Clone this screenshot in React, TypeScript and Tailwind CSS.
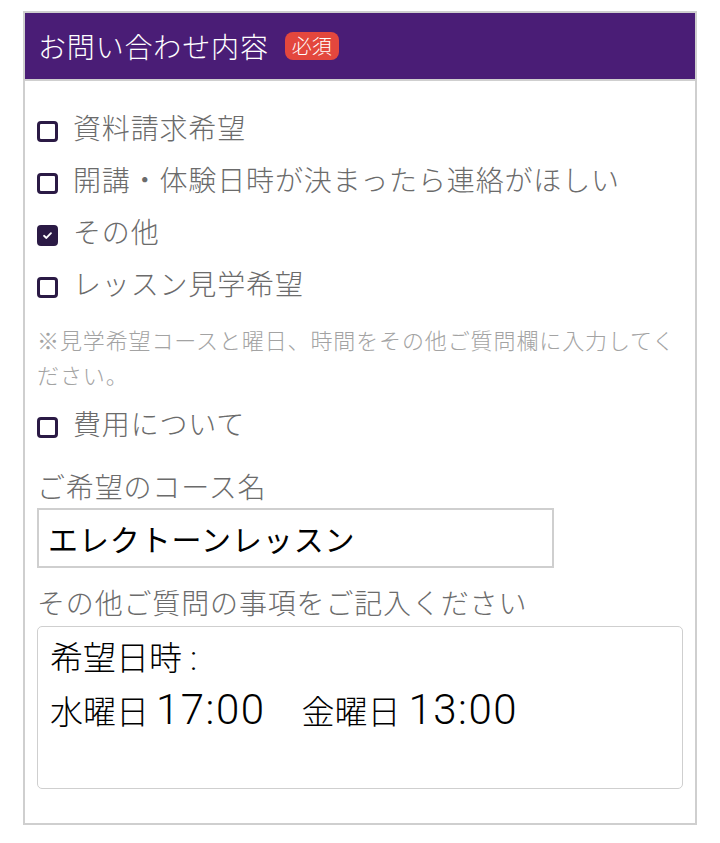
import { useState } from "react";

const options = [
  { label: "資料請求希望", checked: false },
  { label: "開講・体験日時が決まったら連絡がほしい", checked: false },
  { label: "その他", checked: true },
  { label: "レッスン見学希望", checked: false },
];

const Box = ({ checked }: { checked: boolean }) => (
  <span
    className={
      checked
        ? "mt-[9px] flex h-[21px] w-[21px] shrink-0 items-center justify-center rounded-[4px] border-[3px] border-[#2b1a45] bg-[#2b1a45]"
        : "mt-[9px] flex h-[21px] w-[21px] shrink-0 items-center justify-center rounded-[4px] border-[3px] border-[#2b1a45] bg-white"
    }
  >
    {checked && (
      <svg viewBox="0 0 12 12" className="h-[11px] w-[11px]">
        <path d="M2.2 6.3 L4.8 8.7 L9.8 3.4" fill="none" stroke="#fff" strokeWidth="2" strokeLinecap="round" strokeLinejoin="round" />
      </svg>
    )}
  </span>
);

const Option = ({ label, checked }: { label: string; checked: boolean }) => (
  <label className="flex h-[52px] items-center gap-[15px]">
    <Box checked={checked} />
    <span className="text-[28px] font-light leading-[52px] tracking-[0.03em] text-[#6b6b6b]">{label}</span>
  </label>
);

// digits in the memo field use a taller Latin face
const Num = ({ children, className }: { children: string; className?: string }) => (
  <span
    className={"text-[42px] font-light tracking-[1.5px] " + (className ?? "")}
    style={{ fontFamily: "Roboto, sans-serif" }}
  >
    {children}
  </span>
);

const App = () => {
  const [course] = useState("エレクトーンレッスン");

  return (
    <div
      className="min-h-[843px] bg-white pt-[11px]"
      style={{ fontFamily: '"Noto Sans CJK JP", "Noto Sans", sans-serif' }}
    >
      <div className="mx-[23px] border-2 border-[#cfcfcf]">
        {/* Header */}
        <div className="flex h-[68px] items-center gap-[16px] border-b-2 border-[#cfcfcf] bg-[#4a1d76] pl-[13px]">
          <h2 className="text-[28px] font-light leading-none tracking-[0.03em] text-white">お問い合わせ内容</h2>
          <span className="flex h-[28px] items-center rounded-[8px] bg-[#e3473d] px-[7px] text-[20px] font-light leading-none text-white">
            必須
          </span>
        </div>

        {/* Body */}
        <div className="px-[12px] pt-[20px] pb-[34px]">
          {options.map((o) => (
            <Option key={o.label} label={o.label} checked={o.checked} />
          ))}

          <p className="mt-[13px] text-[22px] font-light leading-[35px] tracking-[0.04em] text-[#a3a3a3]">
            ※見学希望コースと曜日、時間をその他ご質問欄に入力してください。
          </p>

          <div className="mt-[5px]">
            <Option label="費用について" checked={false} />
          </div>

          <p className="mt-[15px] text-[28px] font-light leading-[44px] tracking-[0.03em] text-[#6b6b6b]">ご希望のコース名</p>
          <input
            readOnly
            value={course}
            className="block h-[60px] w-[517px] border-2 border-[#cfcfcf] px-[9px] text-[30px] tracking-[0.03em] text-black outline-none"
          />

          <p className="mt-[12px] text-[28px] font-light leading-[44px] tracking-[0.03em] text-[#6b6b6b]">
            その他ご質問の事項をご記入ください
          </p>
          <div
            role="textbox"
            aria-multiline="true"
            className="mt-[2px] h-[163px] w-full rounded-[5px] border-[1.5px] border-[#cfcfcf] px-[12px] pt-[2px] text-[33px] font-light leading-[54px] text-black"
          >
            <div className="h-[54px]">
              希望日時<span className="ml-[8px] text-[34px] font-light" style={{ fontFamily: "Roboto, sans-serif" }}>:</span>
            </div>
            <div className="h-[54px] whitespace-nowrap">
              水曜日<Num className="ml-[7px]">17:00</Num>
              <span className="ml-[36px]">金曜日</span>
              <Num className="ml-[8px]">13:00</Num>
            </div>
          </div>
        </div>
      </div>
    </div>
  );
};

export default App;
